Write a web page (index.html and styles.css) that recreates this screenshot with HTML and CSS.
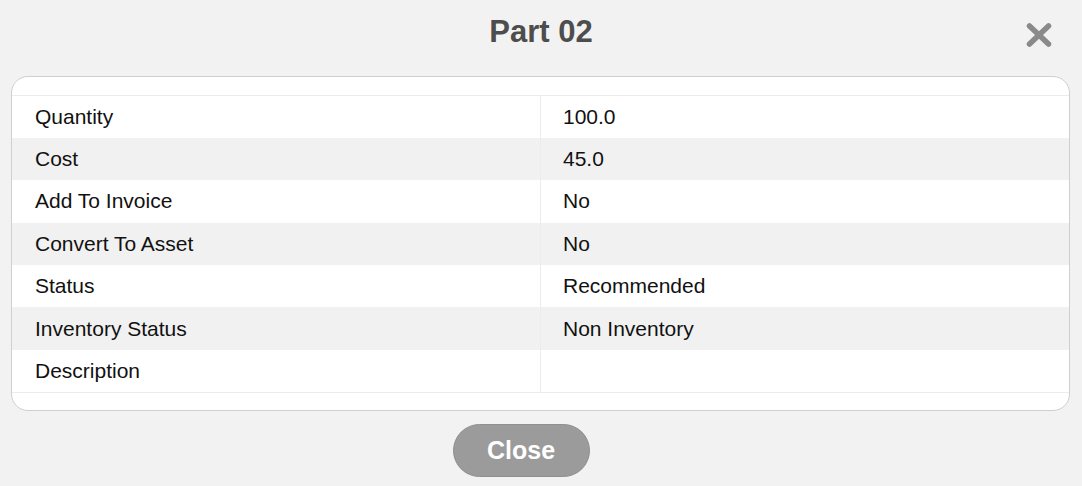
FILE: index.html
```html
<!DOCTYPE html>
<html>
<head>
<meta charset="utf-8">
<link rel="stylesheet" href="styles.css">
</head>
<body>
<div class="dialog">
  <header class="head">
    <span></span>
    <h1 class="title">Part 02</h1>
    <button class="x" aria-label="Close">
      <svg width="26" height="24" viewBox="0 0 26 24"><path d="M3.5 3 L22.5 21 M22.5 3 L3.5 21" stroke="#8a8a8a" stroke-width="5.5" stroke-linecap="round" fill="none"/></svg>
    </button>
  </header>
  <div class="card">
    <table class="props">
      <tr><td>Quantity</td><td>100.0</td></tr>
      <tr><td>Cost</td><td>45.0</td></tr>
      <tr><td>Add To Invoice</td><td>No</td></tr>
      <tr><td>Convert To Asset</td><td>No</td></tr>
      <tr><td>Status</td><td>Recommended</td></tr>
      <tr><td>Inventory Status</td><td>Non Inventory</td></tr>
      <tr><td>Description</td><td></td></tr>
    </table>
  </div>
  <div class="foot">
    <button class="close-btn">Close</button>
  </div>
</div>
</body>
</html>
```
FILE: styles.css
```css
html, body {
  margin: 0;
  padding: 0;
  background: #f2f2f2;
  font-family: "Liberation Sans", Arial, sans-serif;
  color: #111;
}
.dialog {
  width: 1082px;
  height: 486px;
}
.head {
  display: grid;
  grid-template-columns: 1fr auto 1fr;
  height: 76px;
}
.title {
  margin: 14px 0 0;
  font-size: 31px;
  line-height: 36px;
  font-weight: bold;
  color: #4d4d4d;
}
.x {
  justify-self: end;
  align-self: start;
  margin: 23px 30px 0 0;
  padding: 0;
  border: 0;
  background: none;
  width: 26px;
  height: 24px;
  display: block;
}
.x svg { display: block; }
.card {
  margin: 0 12px 0 11px;
  background: #fff;
  border: 1px solid #cfcfcf;
  border-radius: 17px;
  padding: 18px 0 17px;
}
.props {
  width: 100%;
  border-collapse: collapse;
  table-layout: fixed;
  border-top: 1px solid #ececec;
  border-bottom: 1px solid #ececec;
  font-size: 21px;
}
.props tr {
  height: 42.4px;
}
.props td {
  padding: 0 0 0 23px;
  vertical-align: middle;
  box-sizing: border-box;
}
.props td + td {
  border-left: 1px solid #ececec;
  padding-left: 22px;
}
.props tr:nth-child(even) td {
  background: #f1f1f1;
}
.foot {
  display: flex;
  justify-content: center;
  padding-top: 13px;
}
.close-btn {
  width: 137px;
  height: 53px;
  border-radius: 27px;
  border: 1px solid #8f8f8f;
  background: #9b9b9b;
  color: #fff;
  font-family: "Liberation Sans", Arial, sans-serif;
  font-weight: bold;
  font-size: 25px;
  padding: 0;
  margin-right: 40px;
}
```
